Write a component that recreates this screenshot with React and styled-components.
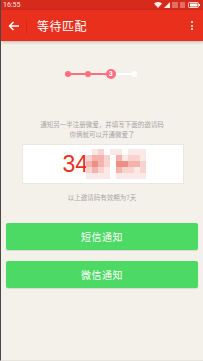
import React from "react"
import styled, { createGlobalStyle } from "styled-components"

const GlobalStyle = createGlobalStyle`
	html, body {
		margin: 0;
		padding: 0;
		background: #f4f1eb;
	}
	body {
		font-family: "Noto Sans CJK SC", "Noto Sans", sans-serif;
	}
`

const Screen = styled.div`
	width: 203px;
	height: 361px;
	box-sizing: border-box;
	border-left: 1px solid #4a4846;
	border-bottom: 1px solid #e6e4dc;
	background: #f4f1eb;
	display: flex;
	flex-direction: column;
	overflow: hidden;
`

const StatusBar = styled.div`
	height: 10px;
	background: #d62b1c;
	display: flex;
	align-items: center;
	justify-content: space-between;
	padding: 0 3px 0 2px;
	color: rgba(255, 255, 255, 0.9);
	font-family: "Roboto", sans-serif;
	font-size: 7px;
	line-height: 10px;
`

const StatusIcons = styled.div`
	display: flex;
	align-items: center;
	gap: 2px;
`

const Toolbar = styled.div`
	height: 31px;
	background: #e8301d;
	display: flex;
	align-items: center;
	box-shadow: 0 1px 3px rgba(0, 0, 0, 0.25);
	position: relative;
	z-index: 1;
`

const Back = styled.div`
	width: 26px;
	display: flex;
	align-items: center;
	justify-content: center;
	border-right: 1px solid rgba(0, 0, 0, 0.08);
	box-sizing: border-box;
	height: 16px;
`

const Title = styled.div`
	flex: 1;
	padding-left: 10px;
	color: #fff;
	font-size: 12px;
	font-weight: 400;
	letter-spacing: 0.5px;
`

const More = styled.div`
	width: 14px;
	display: flex;
	flex-direction: column;
	align-items: center;
	gap: 1.5px;
	margin-right: 4px;
	span {
		width: 2px;
		height: 2px;
		border-radius: 50%;
		background: #fff;
	}
`

const Content = styled.div`
	flex: 1;
	display: flex;
	flex-direction: column;
	align-items: center;
	padding-top: 28px;
`

const Stepper = styled.div`
	width: 72px;
	height: 10px;
	display: flex;
	align-items: center;
	margin-left: -3px;
`

const Dot = styled.div`
	width: ${p => (p.$big ? 10 : 6)}px;
	height: ${p => (p.$big ? 10 : 6)}px;
	border-radius: 50%;
	background: ${p => (p.$done ? "#ff6d7e" : "#fff")};
	color: #fff;
	font-family: "Roboto", sans-serif;
	font-size: 7px;
	font-weight: bold;
	display: flex;
	align-items: center;
	justify-content: center;
	flex-shrink: 0;
`

const Line = styled.div`
	flex: 1;
	height: 2px;
	background: ${p => (p.$done ? "#ff6d7e" : "#fff")};
`

const Hint = styled.div`
	margin-top: 41px;
	text-align: center;
	color: #a9a6a2;
	font-size: 6.5px;
	line-height: 9.5px;
`

const CodeBox = styled.div`
	margin-top: 5px;
	width: 162px;
	height: 40px;
	margin-left: 1px;
	background: #fff;
	border: 1px solid #ebe8e2;
	display: flex;
	align-items: center;
	padding-left: 40px;
	box-sizing: border-box;
`

const CodeText = styled.div`
	color: #e8301d;
	font-family: "Liberation Sans", sans-serif;
	font-size: 23px;
	line-height: 1;
`

const Mosaic = styled.div`
	display: grid;
	grid-template-columns: repeat(10, 6px);
	grid-template-rows: repeat(5, 6px);
	margin-left: -2px;
`

const Cell = styled.div`
	background: ${p => p.$c};
`

const Expire = styled.div`
	margin-top: 8px;
	color: #a9a6a2;
	font-size: 6.5px;
`

const Buttons = styled.div`
	align-self: stretch;
	padding: 0 5px;
	margin-top: 21px;
	display: flex;
	flex-direction: column;
	gap: 11px;
`

const Button = styled.button`
	height: 27px;
	border: none;
	border-radius: 2px;
	background: #4cd964;
	color: #fff;
	font-family: "Noto Sans CJK SC", sans-serif;
	font-size: 10px;
	letter-spacing: 0.5px;
	box-shadow: 0 1px 1px rgba(0, 0, 0, 0.1);
	padding: 0;
`

const mosaic = [
	"ABCABBABBB",
	"CDDCADBCCB",
	"DEDCAEEDDC",
	"CDCBADCCBC",
	"BBBBABBBBB",
]
const shades = {
	A: "#fff",
	B: "#fbe9e7",
	C: "#f8d3cf",
	D: "#f4b3ac",
	E: "#ee8f86",
}

export default function App() {
	return (
		<>
			<GlobalStyle />
			<Screen>
				<StatusBar>
					<span>16:55</span>
					<StatusIcons>
						<svg width="8" height="6" viewBox="0 0 8 6">
							<path d="M0 1.5 A6 6 0 0 1 8 1.5 L4 6 Z" fill="#fff" opacity="0.9" />
						</svg>
						<svg width="6" height="6" viewBox="0 0 6 6">
							<path d="M0 6 L6 0 L6 6 Z" fill="#fff" opacity="0.9" />
						</svg>
						<svg width="6" height="6" viewBox="0 0 6 6">
							<path d="M0 1h6M0 3h6M0 5h6" stroke="#fff" strokeWidth="0.8" opacity="0.8" />
						</svg>
						<svg width="6" height="6" viewBox="0 0 6 6">
							<path d="M0 1h5M0 3h5M0 5h5" stroke="#fff" strokeWidth="0.8" opacity="0.8" />
						</svg>
						<svg width="12" height="6" viewBox="0 0 12 6">
							<rect x="0.5" y="0.5" width="10" height="5" rx="1" fill="none" stroke="#fff" strokeWidth="0.8" />
							<rect x="2" y="1.5" width="7.5" height="3" fill="#fff" />
							<rect x="11" y="2" width="1" height="2" fill="#fff" />
						</svg>
					</StatusIcons>
				</StatusBar>
				<Toolbar>
					<Back>
						<svg width="12" height="10" viewBox="0 0 12 10">
							<path d="M11 5H1.5M5.5 1L1.5 5L5.5 9" fill="none" stroke="#fff" strokeWidth="1.5" />
						</svg>
					</Back>
					<Title>等待匹配</Title>
					<More>
						<span />
						<span />
						<span />
					</More>
				</Toolbar>
				<Content>
					<Stepper>
						<Dot $done />
						<Line $done />
						<Dot $done />
						<Line $done />
						<Dot $done $big>3</Dot>
						<Line />
						<Dot />
					</Stepper>
					<Hint>
						通知另一半注册微爱，并填写下面的邀请码
						<br />
						你俩就可以开通微爱了
					</Hint>
					<CodeBox>
						<CodeText>34</CodeText>
						<Mosaic>
							{mosaic.join("").split("").map((k, i) => (
								<Cell key={i} $c={shades[k]} />
							))}
						</Mosaic>
					</CodeBox>
					<Expire>以上邀请码有效期为7天</Expire>
					<Buttons>
						<Button>短信通知</Button>
						<Button>微信通知</Button>
					</Buttons>
				</Content>
			</Screen>
		</>
	)
}
